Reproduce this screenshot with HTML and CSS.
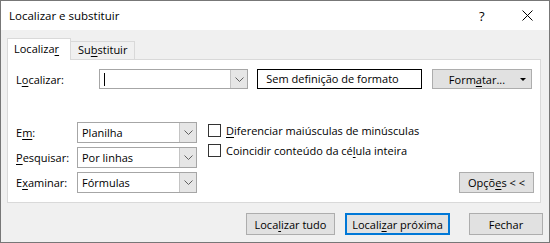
FILE: index.html
```html
<!DOCTYPE html>
<html>
<head>
    <meta charset="utf-8" />
    <title>Localizar e substituir</title>
    <link rel="stylesheet" href="styles.css">
</head>
<body>
    <div class="dialog">
        <div class="titlebar">
            <span class="title">Localizar e substituir</span>
            <span class="help">?</span>
            <span class="close">
                <svg width="11" height="11" viewBox="0 0 11 11"><path d="M0.5 0.5 L10.5 10.5 M10.5 0.5 L0.5 10.5" stroke="#000" stroke-width="1" fill="none"/></svg>
            </span>
        </div>

        <div class="content">
            <div class="tabs">
                <div class="tab active">Localiza<u>r</u></div>
                <div class="tab">Su<u>b</u>stituir</div>
            </div>

            <div class="panel">
                <div class="find-row">
                    <label class="find-label">L<u>o</u>calizar:</label>
                    <div class="combo find-combo">
                        <span class="value"><span class="caret"></span></span>
                        <span class="arrow"><svg width="9" height="5" viewBox="0 0 9 5"><path d="M0.5 0.5 L4.5 4.5 L8.5 0.5" stroke="#606060" fill="none"/></svg></span>
                    </div>
                    <div class="format-preview">Sem definição de formato</div>
                    <button class="btn format-btn">Form<u>a</u>tar...<span class="drop"></span></button>
                </div>

                <div class="options">
                    <div class="fields">
                        <label>E<u>m</u>:</label>
                        <div class="combo">
                            <span class="value">Planilha</span>
                            <span class="arrow"><svg width="9" height="5" viewBox="0 0 9 5"><path d="M0.5 0.5 L4.5 4.5 L8.5 0.5" stroke="#606060" fill="none"/></svg></span>
                        </div>
                        <label><u>P</u>esquisar:</label>
                        <div class="combo">
                            <span class="value">Por linhas</span>
                            <span class="arrow"><svg width="9" height="5" viewBox="0 0 9 5"><path d="M0.5 0.5 L4.5 4.5 L8.5 0.5" stroke="#606060" fill="none"/></svg></span>
                        </div>
                        <label>E<u>x</u>aminar:</label>
                        <div class="combo">
                            <span class="value">Fórmulas</span>
                            <span class="arrow"><svg width="9" height="5" viewBox="0 0 9 5"><path d="M0.5 0.5 L4.5 4.5 L8.5 0.5" stroke="#606060" fill="none"/></svg></span>
                        </div>
                    </div>

                    <div class="checks">
                        <div class="check"><span class="box"></span><u>D</u>iferenciar maiúsculas de minúsculas</div>
                        <div class="check"><span class="box"></span>Coincidir conteúdo da cé<u>l</u>ula inteira</div>
                    </div>

                    <button class="btn more-btn">Opçõ<u>e</u>s &lt; &lt;</button>
                </div>
            </div>

            <div class="actions">
                <button class="btn">Loca<u>l</u>izar tudo</button>
                <button class="btn default">Locali<u>z</u>ar próxima</button>
                <button class="btn close-btn">Fechar</button>
            </div>
        </div>
    </div>
</body>
</html>
```

FILE: styles.css
```css
* { margin: 0; padding: 0; box-sizing: border-box; }

body {
    background: #ffffff;
    font-family: "Open Sans", "Noto Sans", sans-serif;
    font-size: 11px;
    color: #000;
}

u { text-decoration: underline; text-underline-offset: 2px; }

.dialog {
    width: 550px;
    height: 243px;
    border: 1px solid #777;
    background: #f0f0f0;
    display: flex;
    flex-direction: column;
}

.titlebar {
    height: 29px;
    background: #fff;
    display: flex;
    align-items: center;
    padding-left: 8px;
}

.titlebar .title { flex: 1; font-size: 11.5px; }

.titlebar .help {
    width: 12px;
    margin-right: 31px;
    font-size: 13px;
}

.titlebar .close {
    width: 11px;
    height: 11px;
    margin-right: 16px;
    display: flex;
}

.content {
    flex: 1;
    padding: 8px 6px 0 6px;
}

.tabs {
    display: flex;
    align-items: flex-end;
    height: 21px;
}

.tab {
    width: 64px;
    height: 18px;
    padding-left: 7px;
    border: 1px solid #d9d9d9;
    border-left: 0;
    border-bottom: 0;
    line-height: 16px;
    background: #f0f0f0;
}

.tab.active {
    height: 22px;
    margin-bottom: -1px;
    border-left: 1px solid #d9d9d9;
    background: #fff;
    line-height: 20px;
    padding-left: 6px;
    position: relative;
    z-index: 1;
}

.panel {
    width: 534px;
    height: 144px;
    border: 1px solid #d9d9d9;
    background: #fff;
    padding: 9px 6px 9px 8px;
    display: flex;
    flex-direction: column;
    justify-content: space-between;
}

.find-row {
    display: flex;
    align-items: center;
    height: 20px;
}

.find-label { width: 83px; }

.combo {
    display: flex;
    height: 21px;
    border: 1px solid #a6a6a6;
    background: #fff;
}

.combo .value {
    flex: 1;
    padding-left: 4px;
    line-height: 19px;
    position: relative;
}

.combo .arrow {
    width: 17px;
    background: #e6e6e6;
    border-left: 1px solid #c4c4c4;
    display: flex;
    align-items: center;
    justify-content: center;
}

.find-combo {
    width: 149px;
    height: 20px;
}

.find-combo .caret {
    position: absolute;
    left: 4px;
    top: 3px;
    width: 1px;
    height: 13px;
    background: #000;
}

.format-preview {
    width: 165px;
    height: 20px;
    margin-left: 9px;
    border: 1px solid #000;
    text-align: center;
    line-height: 18px;
    padding-right: 14px;
}

.btn {
    font-family: inherit;
    font-size: inherit;
    color: #000;
    height: 21px;
    background: #e1e1e1;
    border: 1px solid #adadad;
    text-align: center;
    line-height: 19px;
}

.format-btn {
    width: 100px;
    height: 20px;
    margin-left: 10px;
    position: relative;
    padding-right: 10px;
}

.format-btn .drop {
    position: absolute;
    right: 5px;
    top: 8px;
    border-left: 3px solid transparent;
    border-right: 3px solid transparent;
    border-top: 3px solid #000;
}

.options {
    display: flex;
    align-items: flex-start;
}

.fields {
    display: grid;
    grid-template-columns: 61px 120px;
    row-gap: 4px;
    align-items: center;
}

.checks {
    margin-left: 11px;
    padding-top: 1px;
    display: flex;
    flex-direction: column;
    gap: 6px;
}

.check {
    display: flex;
    align-items: center;
    height: 14px;
}

.check .box {
    width: 13px;
    height: 13px;
    border: 1px solid #333;
    background: #fff;
    margin-right: 5px;
}

.more-btn {
    width: 75px;
    margin-left: auto;
    margin-top: 50px;
}

.actions {
    display: flex;
    justify-content: flex-end;
    padding-top: 10px;
}

.actions .btn {
    width: 89px;
    height: 22px;
}

.actions .default {
    width: 105px;
    margin-left: 10px;
    border: 2px solid #0078d7;
}

.actions .close-btn {
    width: 74px;
    margin-left: 19px;
}
```
